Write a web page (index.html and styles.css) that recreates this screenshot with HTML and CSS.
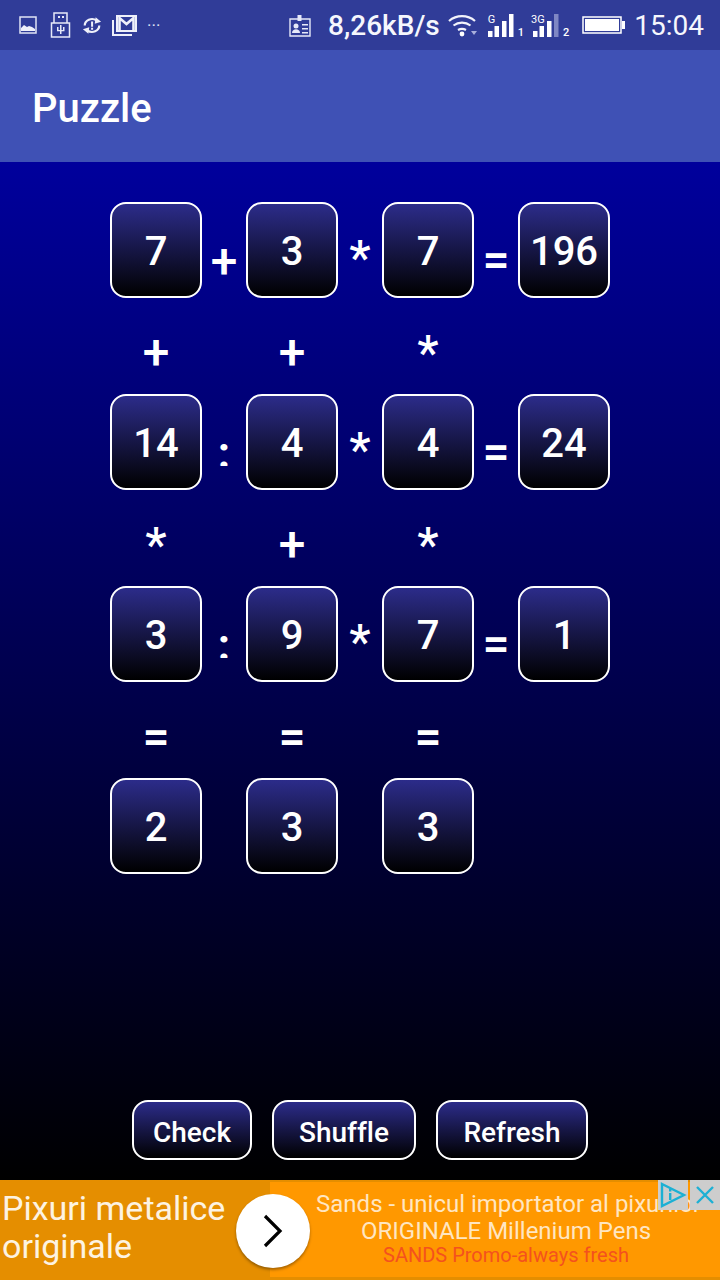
FILE: index.html
```html
<!DOCTYPE html>
<html lang="ro">
<head>
<meta charset="utf-8">
<title>Puzzle</title>
<link rel="stylesheet" href="styles.css">
</head>
<body>
<div class="page">
  <header class="status">
    <div class="status-left">
      <svg class="ic ic-image" width="18" height="18" viewBox="0 0 18 18"><rect x="1" y="1" width="16" height="16" fill="none" stroke="#dfe3f5" stroke-width="1.500"/><path d="M2 15v-3l3-3 3 2 2-1 3 1 3 2v2z" fill="#eef0fa"/></svg>
      <svg class="ic" width="22" height="26" viewBox="0 0 22 26"><path d="M4 1h13v10H4zM1.500 11h18v14h-18z" fill="none" stroke="#e6e9f8" stroke-width="1.500"/><path d="M8 4h2v2H8zM12 4h2v2h-2zM10 13h1.500v9H10zM7 15h1.500v3H7zM13 15h1.500v3H13zM7 18h7.500v1.200H7z" fill="#e6e9f8"/></svg>
      <svg class="ic" width="20" height="17" viewBox="0 0 22 18"><path d="M3 9a8 7 0 0 1 13-5.500M19 9a8 7 0 0 1-13 5.500" fill="none" stroke="#eef0fa" stroke-width="2.400"/><path d="M15 0l6 5-7 2zM7 18l-6-5 7-2z" fill="#eef0fa"/><path d="M10 4.500h2.200v6H10zM10 11.500h2.200v2.200H10z" fill="#eef0fa"/></svg>
      <svg class="ic" width="25" height="21" viewBox="0 0 25 21"><path d="M1 5v15h19" fill="none" stroke="#eef0fa" stroke-width="2"/><path d="M5 1h19v15H5z" fill="#303c98" stroke="#eef0fa" stroke-width="2"/><path d="M7.500 15V3l7 6 7-6v12" fill="none" stroke="#eef0fa" stroke-width="2.600"/></svg>
      <span class="more">···</span>
    </div>
    <div class="status-right">
      <svg class="ic" width="22" height="23" viewBox="0 0 22 23"><path d="M1 5h20v17H1z" fill="none" stroke="#e6e9f8" stroke-width="1.400"/><path d="M8.500 1h4v6h-4z" fill="#e6e9f8"/><circle cx="7" cy="12" r="2.500" fill="#e6e9f8"/><path d="M3 19c0-5 8-5 8 0z" fill="#e6e9f8"/><path d="M13 10h6v1.400h-6zM13 14h6v1.400h-6zM13 18h6v1.400h-6z" fill="#e6e9f8"/></svg>
      <span class="speed">8,26kB/s</span>
      <svg class="wifi" width="30" height="23" viewBox="0 0 30 23"><path d="M1 7a20 20 0 0 1 26 0M5.500 11.500a14 14 0 0 1 17 0M10 16a8 8 0 0 1 8 0" fill="none" stroke="#f2f3fb" stroke-width="2.200"/><circle cx="14" cy="20" r="2.400" fill="#fff"/><path d="M23 17h6l-3 4z" fill="#aab0dc"/></svg>
      <div class="signal signal-1">
        <span class="net">G</span>
        <svg width="26" height="23" viewBox="0 0 26 23"><path d="M0 17h4.500v6H0zM6.500 12h4.500v11H6.500zM14 7h4.500v16H14z" fill="#fff"/><path d="M21 0h4.500v23H21z" fill="#fff"/></svg>
        <span class="sim">1</span>
      </div>
      <div class="signal signal-2">
        <span class="net">3G</span>
        <svg width="26" height="23" viewBox="0 0 26 23"><path d="M0 17h4.500v6H0zM6.500 12h4.500v11H6.500zM14 7h4.500v16H14z" fill="#fff"/><path d="M21 0h4.500v23H21z" fill="#7f87c4"/></svg>
        <span class="sim">2</span>
      </div>
      <svg class="battery" width="43" height="18" viewBox="0 0 43 18"><path d="M1 1h38v16H1z" fill="none" stroke="#fff" stroke-width="1.500"/><path d="M3 3h34v12H3z" fill="#fff"/><path d="M40 5h3v8h-3z" fill="#fff"/></svg>
      <span class="clock">15:04</span>
    </div>
  </header>

  <div class="appbar">Puzzle</div>

  <main class="board">
    <div class="grid">
      <div class="cell">7</div><div class="op">+</div><div class="cell">3</div><div class="op star">*</div><div class="cell">7</div><div class="op eq">=</div><div class="cell">196</div>
      <div class="vop plus">+</div><div></div><div class="vop plus">+</div><div></div><div class="vop">*</div><div></div><div></div>
      <div class="cell">14</div><div class="op div">:</div><div class="cell">4</div><div class="op star">*</div><div class="cell">4</div><div class="op eq">=</div><div class="cell">24</div>
      <div class="vop">*</div><div></div><div class="vop plus">+</div><div></div><div class="vop">*</div><div></div><div></div>
      <div class="cell">3</div><div class="op div">:</div><div class="cell">9</div><div class="op star">*</div><div class="cell">7</div><div class="op eq">=</div><div class="cell">1</div>
      <div class="vop">=</div><div></div><div class="vop">=</div><div></div><div class="vop">=</div><div></div><div></div>
      <div class="cell">2</div><div></div><div class="cell">3</div><div></div><div class="cell">3</div><div></div><div></div>
    </div>
    <div class="actions">
      <button class="btn btn-check">Check</button>
      <button class="btn btn-shuffle">Shuffle</button>
      <button class="btn btn-refresh">Refresh</button>
    </div>
  </main>

  <aside class="ad">
    <div class="ad-left">Pixuri metalice originale</div>
    <div class="ad-right">
      <div class="ad-line1">Sands - unicul importator al pixurilor</div>
      <div class="ad-line2">ORIGINALE Millenium Pens</div>
      <div class="ad-line3">SANDS Promo-always fresh</div>
    </div>
    <div class="ad-go"><svg width="22" height="34" viewBox="0 0 22 34"><path d="M3 2l15 15L3 32" fill="none" stroke="#000" stroke-width="3.200"/></svg></div>
    <div class="ad-choices">
      <span class="ad-i"><svg width="28" height="28" viewBox="0 0 28 28"><path d="M3 3l22 11L3 25z" fill="none" stroke="#1cb0d4" stroke-width="2.400"/><path d="M10 12h2.400v7H10zM10 8h2.400v2.400H10z" fill="#1cb0d4"/></svg></span>
      <span class="ad-x"><svg width="22" height="22" viewBox="0 0 22 22"><path d="M3 3l16 16M19 3L3 19" fill="none" stroke="#1cb0d4" stroke-width="2.400"/></svg></span>
    </div>
  </aside>
</div>
</body>
</html>
```
FILE: styles.css
```css
* { box-sizing: border-box; }
html, body { margin: 0; padding: 0; }
body { font-family: Roboto, "Noto Sans", sans-serif; color: #fff; font-variant-ligatures: none; }
.page { width: 720px; height: 1280px; display: flex; flex-direction: column; position: relative; overflow: hidden; }

.status { height: 50px; flex: none; background: #303c98; display: flex; justify-content: space-between; align-items: center; padding: 0 16px 0 19px; }
.status-left, .status-right { display: flex; align-items: center; }
.status-left { gap: 10px; }
.status-left .ic { flex: none; }
.ic-image { margin-right: 3px; }
.more { font-size: 17px; color: #dfe3f5; line-height: 20px; }
.speed { font-size: 28px; font-weight: 500; margin-left: 17px; color: #f6f7fd; }
.wifi { margin-left: 8px; }
.signal { position: relative; display: flex; align-items: flex-end; height: 23px; }
.signal-1 { margin-left: 10px; }
.signal-2 { margin-left: 7px; padding-left: 2px; }
.net { position: absolute; left: 0; top: 1px; font-size: 11px; line-height: 10px; color: #fff; }
.sim { font-size: 11px; font-weight: 500; margin-left: 4px; line-height: 9px; }
.battery { margin-left: 13px; }
.clock { font-size: 28px; margin-left: 9px; color: #f6f7fd; }

.appbar { height: 112px; flex: none; background: #3f51b5; font-size: 40px; font-weight: 500; display: flex; align-items: center; padding: 4px 0 0 32px; }

.board { flex: 1; display: flex; flex-direction: column; justify-content: space-between; padding: 40px 0 20px; background: linear-gradient(#00009c, #000); }
.grid { display: grid; grid-template-columns: 92px 44px 92px 44px 92px 44px 92px; grid-auto-rows: 96px; margin: 0 auto; }
.cell { width: 92px; height: 96px; border: 2px solid #fff; border-radius: 16px; background: linear-gradient(#2c2c8a, #000); font-size: 40px; font-weight: 500; display: flex; align-items: center; justify-content: center; padding-top: 2px; }
.op, .vop { display: flex; justify-content: center; font-size: 48px; font-weight: 500; line-height: 56px; }
.op { align-items: flex-end; padding-bottom: 8px; }
.op.star { padding-bottom: 12px; }
.op.eq { padding-bottom: 10px; }
.vop { align-items: center; padding-top: 13px; }
.vop.plus { padding-top: 14px; }
.op.div { font-size: 44px; font-weight: 700; height: 72px; align-self: start; overflow: hidden; align-items: flex-start; padding: 31px 0 0; }

.actions { display: flex; justify-content: center; gap: 20px; }
.btn { height: 60px; border: 2px solid #fff; border-radius: 16px; background: linear-gradient(#2c2c8a, #000); color: #fff; font-family: Roboto, sans-serif; font-size: 28px; font-weight: 500; font-variant-ligatures: none; padding: 4px 0 0; }
.btn-check { width: 120px; }
.btn-shuffle { width: 144px; }
.btn-refresh { width: 152px; }

.ad { height: 100px; flex: none; background: #e58e00; display: flex; position: relative; }
.ad-left { width: 270px; padding: 9px 0 0 2px; font-size: 34px; line-height: 38px; color: #fdf3e2; }
.ad-right { flex: 1; margin: 2px 0 3px; padding: 9px 18px 0 40px; background: #ff9800; text-align: center; overflow: hidden; color: #ffe6c2; font-size: 24px; line-height: 27px; white-space: nowrap; }
.ad-line1 { margin-left: 5px; }
.ad-line3 { font-size: 20px; line-height: 20px; color: #f4511e; }
.ad-go { position: absolute; left: 236px; top: 14px; width: 74px; height: 74px; border-radius: 50%; background: #fff; box-shadow: 0 2px 3px rgba(0,0,0,.35); display: flex; align-items: center; justify-content: center; }
.ad-choices { position: absolute; right: 0; top: 0; height: 30px; display: flex; }
.ad-i, .ad-x { height: 30px; background: #cdcdcd; display: flex; align-items: center; justify-content: center; }
.ad-i { width: 30px; margin-right: 2px; }
.ad-x { width: 30px; }
```
